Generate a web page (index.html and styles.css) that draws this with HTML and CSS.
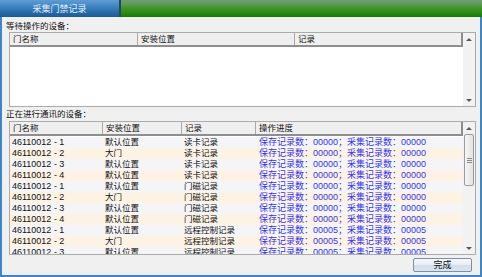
FILE: index.html
```html
<!DOCTYPE html>
<html>
<head>
<meta charset="utf-8">
<link rel="stylesheet" href="styles.css">
</head>
<body>
<div class="win">
  <div class="tabbar">
    <div class="tab">采集门禁记录</div>
    <div class="tabsep"></div>
    <div class="tabfill"></div>
  </div>
  <div class="body">
    <div class="label first">等待操作的设备：</div>
    <div class="list list1">
      <div class="main">
        <div class="hdr cols1">
          <div class="hc">门名称</div>
          <div class="hc">安装位置</div>
          <div class="hc last">记录</div>
        </div>
        <div class="rows"></div>
      </div>
      <div class="vs">
        <div class="arr"><span class="tri up"></span></div>
        <div class="track"></div>
        <div class="arr"><span class="tri down"></span></div>
      </div>
    </div>

    <div class="label second">正在进行通讯的设备：</div>
    <div class="list list2">
      <div class="main">
        <div class="hdr cols2">
          <div class="hc">门名称</div>
          <div class="hc">安装位置</div>
          <div class="hc">记录</div>
          <div class="hc last">操作进度</div>
        </div>
        <div class="rows">
          <div class="row cols2"><div class="num">46110012 - 1</div><div>默认位置</div><div>读卡记录</div><div class="prog">保存记录数：00000；采集记录数：00000</div></div>
          <div class="row cols2"><div class="num">46110012 - 2</div><div>大门</div><div>读卡记录</div><div class="prog">保存记录数：00000；采集记录数：00000</div></div>
          <div class="row cols2"><div class="num">46110012 - 3</div><div>默认位置</div><div>读卡记录</div><div class="prog">保存记录数：00000；采集记录数：00000</div></div>
          <div class="row cols2"><div class="num">46110012 - 4</div><div>默认位置</div><div>读卡记录</div><div class="prog">保存记录数：00000；采集记录数：00000</div></div>
          <div class="row cols2"><div class="num">46110012 - 1</div><div>默认位置</div><div>门磁记录</div><div class="prog">保存记录数：00000；采集记录数：00000</div></div>
          <div class="row cols2"><div class="num">46110012 - 2</div><div>大门</div><div>门磁记录</div><div class="prog">保存记录数：00000；采集记录数：00000</div></div>
          <div class="row cols2"><div class="num">46110012 - 3</div><div>默认位置</div><div>门磁记录</div><div class="prog">保存记录数：00000；采集记录数：00000</div></div>
          <div class="row cols2"><div class="num">46110012 - 4</div><div>默认位置</div><div>门磁记录</div><div class="prog">保存记录数：00000；采集记录数：00000</div></div>
          <div class="row cols2"><div class="num">46110012 - 1</div><div>默认位置</div><div>远程控制记录</div><div class="prog">保存记录数：00005；采集记录数：00005</div></div>
          <div class="row cols2"><div class="num">46110012 - 2</div><div>大门</div><div>远程控制记录</div><div class="prog">保存记录数：00005；采集记录数：00005</div></div>
          <div class="row cols2"><div class="num">46110012 - 3</div><div>默认位置</div><div>远程控制记录</div><div class="prog">保存记录数：00005；采集记录数：00005</div></div>
        </div>
      </div>
      <div class="vs">
        <div class="arr"><span class="tri up"></span></div>
        <div class="thumb"><span class="grip"></span></div>
        <div class="track"></div>
        <div class="arr"><span class="tri down"></span></div>
      </div>
    </div>

    <div class="footer">
      <button class="btn">完成</button>
    </div>
  </div>
</div>
</body>
</html>
```

FILE: styles.css
```css
* { box-sizing: border-box; margin: 0; padding: 0; }
html, body { width: 482px; height: 277px; overflow: hidden; }
body {
  font-family: "Liberation Sans", "Noto Sans CJK SC", sans-serif;
  font-size: 8.5px;
  color: #111;
  background: #f0f0f0;
}
.win { width: 482px; height: 277px; display: flex; flex-direction: column; }

.tabbar { height: 17px; display: flex; flex: none; }
.tab {
  width: 119px;
  background: linear-gradient(#5e9dd2 0, #4287c4 35%, #2c70ae 65%, #1c5896 100%);
  color: #e4eef8;
  font-size: 9px;
  display: flex; align-items: center; justify-content: center;
}
.tabsep { width: 2px; background: #1f4b5e; }
.tabfill {
  flex: 1;
  background: linear-gradient(#729d72 0, #5e9a56 25%, #3c9426 50%, #2a8c12 75%, #1a7608 100%);
}

.body {
  flex: 1;
  border: 2px solid #3d87c9;
  border-top: 0;
  display: flex; flex-direction: column;
  background: #f0f0f0;
}
.label { height: 12px; line-height: 12px; padding-left: 4px; flex: none; white-space: nowrap; }
.label.first { margin-top: 3px; }
.label.second { margin-top: 1px; margin-bottom: 1px; }

.list {
  margin: 0 4px 0 7px;
  border: 1px solid #ababab;
  background: #fff;
  display: flex;
  flex: none;
}
.list1 { height: 75px; }
.list2 { height: 134px; }
.main { flex: 1; display: flex; flex-direction: column; overflow: hidden; min-width: 0; }

.hdr {
  display: grid;
  height: 14px;
  background: #efefef;
  border-bottom: 2px solid #8e8e8e;
  flex: none;
}
.cols1 { grid-template-columns: 128px 157px 1fr; }
.cols2 { grid-template-columns: 93px 79px 74px 1fr; }
.hc {
  border-right: 1px solid #a9a9a9;
  padding-left: 3px;
  line-height: 12px;
  white-space: nowrap;
}
.hc.last { border-right: 2px solid #8e8e8e; }

.rows { flex: 1; overflow: hidden; padding-top: 1px; }
.row { display: grid; height: 11px; line-height: 11px; white-space: nowrap; }
.row:nth-child(odd) { background: #f5f5f7; }
.row:nth-child(even) { background: #fdf3e4; }
.row > div { padding-left: 2px; overflow: hidden; }
.row > .num { font-size: 9px; }
.row > .prog { padding-left: 3px; color: #3636ea; font-size: 9px; }

.vs {
  width: 12px; flex: none;
  background: #f2f2f2;
  display: flex; flex-direction: column;
}
.arr { height: 12px; flex: none; display: flex; align-items: center; justify-content: center; }
.tri { width: 0; height: 0; border-left: 3px solid transparent; border-right: 3px solid transparent; }
.tri.up { border-bottom: 3px solid #5a5a5a; }
.tri.down { border-top: 3px solid #5a5a5a; }
.track { flex: 1; }
.thumb {
  height: 52px; flex: none;
  margin: 0 1px 0 1px;
  border: 1px solid #9c9c9c;
  border-radius: 2px;
  background: linear-gradient(90deg, #f6f6f6, #e2e2e2);
  display: flex; align-items: center; justify-content: center;
}
.grip {
  width: 5px; height: 5px;
  border-top: 1px solid #8a8a8a;
  border-bottom: 1px solid #8a8a8a;
  background: linear-gradient(#8a8a8a, #8a8a8a) center / 100% 1px no-repeat;
}

.footer { display: flex; justify-content: flex-end; margin-top: 3px; padding-right: 8px; }
.btn {
  width: 59px; height: 14px;
  font-family: "Liberation Sans", "Noto Sans CJK SC", sans-serif;
  font-size: 9px; line-height: 12px; color: #111;
  border: 1px solid #7d8fa6;
  border-radius: 2px;
  background: linear-gradient(#f6f9fc 0, #e6edf5 50%, #d3deea 51%, #dbe5f0 100%);
}
```
